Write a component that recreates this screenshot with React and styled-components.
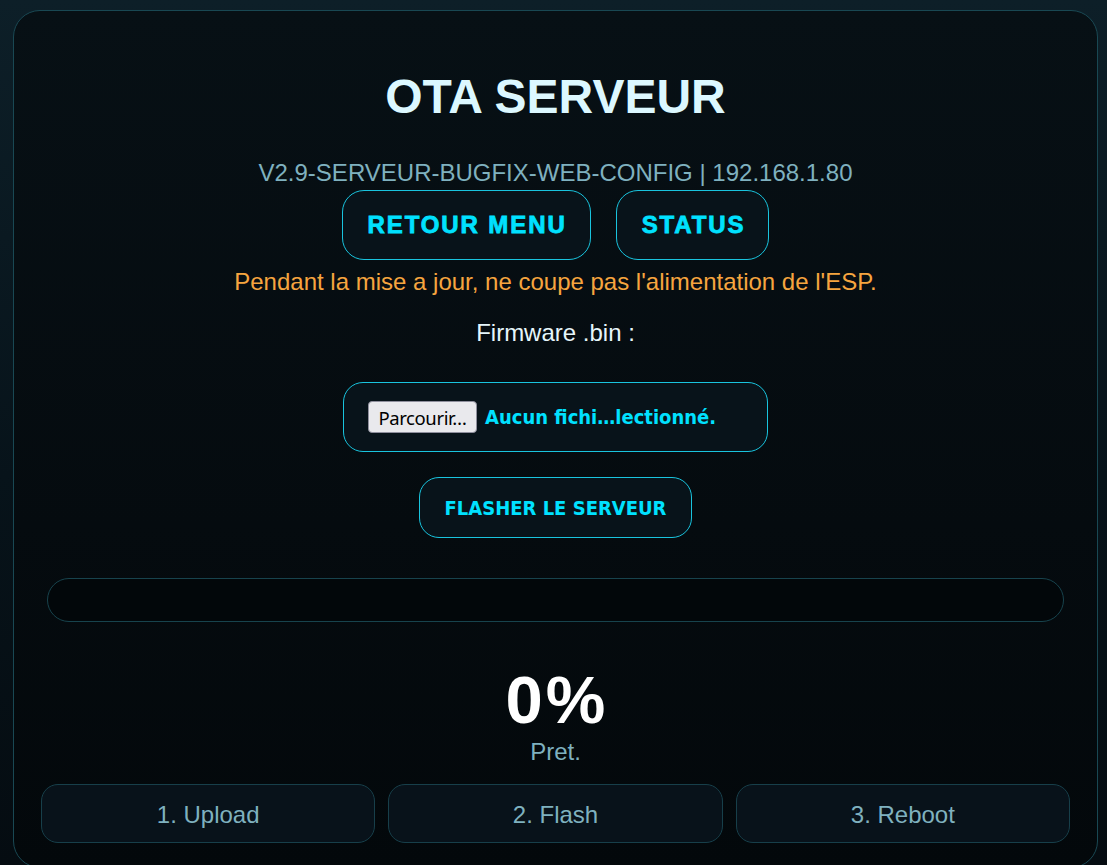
import React from "react";
import styled, { createGlobalStyle } from "styled-components";

const Global = createGlobalStyle`
  html, body {
    margin: 0;
    padding: 0;
    min-height: 100%;
  }
  body {
    background: linear-gradient(180deg, #0d1f28 0%, #07131a 55%, #050c11 100%);
    font-family: "Liberation Sans", Arial, sans-serif;
    overflow: hidden;
  }
`;

const Page = styled.div`
  padding: 10px 9px 0 13px;
  height: 865px;
  box-sizing: border-box;
`;

const Card = styled.main`
  box-sizing: border-box;
  border: 1px solid #194853;
  border-radius: 27px;
  background: linear-gradient(180deg, #071015 0%, #050b0f 60%, #03080b 100%);
  padding: 58px 27px 24px;
  display: flex;
  flex-direction: column;
  align-items: center;
  text-align: center;
`;

const Title = styled.h1`
  margin: 0;
  font-size: 48px;
  font-weight: 700;
  color: #dcf8ff;
  line-height: normal;
`;

const Sub = styled.div`
  margin-top: 35px;
  font-size: 24px;
  color: #7fb1bf;
  line-height: normal;
`;

const NavRow = styled.div`
  margin-top: 3px;
  display: flex;
  gap: 25px;
  justify-content: center;
`;

const NavButton = styled.button`
  box-sizing: border-box;
  height: 70px;
  padding: 0 23px 0 25px;
  border: 1px solid #19c4de;
  border-radius: 22px;
  background: #08131a;
  color: #00e1ff;
  font-family: "Liberation Sans", Arial, sans-serif;
  font-size: 24px;
  font-weight: 700;
  letter-spacing: 1.9px;
  -webkit-text-stroke: 0.8px #00e1ff;
  cursor: pointer;
`;

const Warning = styled.p`
  margin: 8px 0 0;
  font-size: 24px;
  color: #f6a53f;
  line-height: normal;
`;

const Label = styled.label`
  margin-top: 23px;
  font-size: 24px;
  color: #e6f6fb;
  line-height: normal;
`;

const FileBox = styled.div`
  box-sizing: border-box;
  margin-top: 35px;
  width: 425px;
  height: 70px;
  border: 1px solid #19c4de;
  border-radius: 20px;
  background: #08131a;
  display: flex;
  align-items: center;
  padding: 0 24px;
  gap: 8px;
`;

const BrowseButton = styled.span`
  box-sizing: border-box;
  height: 32px;
  width: 109px;
  display: inline-flex;
  align-items: center;
  justify-content: center;
  background: #e9e9ed;
  border: 1px solid #8f8f9d;
  border-radius: 4px;
  color: #000;
  font-family: "Noto Sans", "Open Sans", sans-serif;
  font-size: 18.5px;
  letter-spacing: -0.4px;
`;

const FileName = styled.span`
  color: #00e1ff;
  font-family: "DejaVu Sans Condensed", "DejaVu Sans", sans-serif;
  font-stretch: condensed;
  font-weight: 700;
  font-size: 20px;
  white-space: nowrap;
`;

const FlashButton = styled.button`
  box-sizing: border-box;
  margin-top: 25px;
  height: 61px;
  padding: 0 25px;
  border: 1px solid #19c4de;
  border-radius: 20px;
  background: #08131a;
  color: #00e1ff;
  font-family: "DejaVu Sans Condensed", "DejaVu Sans", sans-serif;
  font-stretch: condensed;
  font-weight: 700;
  font-size: 20px;
  cursor: pointer;
`;

const Progress = styled.div`
  box-sizing: border-box;
  margin-top: 40px;
  align-self: stretch;
  margin-left: 6px;
  margin-right: 6px;
  height: 44px;
  border: 1px solid #17434d;
  border-radius: 22px;
  background: #02070a;
  overflow: hidden;
`;

const Fill = styled.div`
  height: 100%;
  background: linear-gradient(90deg, #00b8d4, #00e1ff);
`;

const Percent = styled.div`
  margin-top: 39px;
  padding-left: 3px;
  font-size: 67px;
  font-weight: 700;
  color: #ffffff;
  letter-spacing: 3px;
  line-height: normal;
`;

const Status = styled.div`
  margin-top: 0px;
  font-size: 24px;
  color: #7fb1bf;
  line-height: normal;
`;

const Steps = styled.div`
  margin-top: 18px;
  align-self: stretch;
  display: grid;
  grid-template-columns: repeat(3, 1fr);
  gap: 13px;
`;

const Step = styled.div`
  box-sizing: border-box;
  height: 59px;
  padding-top: 3px;
  border: 1px solid #173f4a;
  border-radius: 17px;
  background: #08121a;
  color: #7fb1bf;
  font-size: 24px;
  display: flex;
  align-items: center;
  justify-content: center;
`;

export default function App() {
  const progress = 0;
  return (
    <>
      <Global />
      <Page>
        <Card>
          <Title>OTA SERVEUR</Title>
          <Sub>V2.9-SERVEUR-BUGFIX-WEB-CONFIG | 192.168.1.80</Sub>
          <NavRow>
            <NavButton>RETOUR MENU</NavButton>
            <NavButton>STATUS</NavButton>
          </NavRow>
          <Warning>Pendant la mise a jour, ne coupe pas l'alimentation de l'ESP.</Warning>
          <Label>Firmware .bin :</Label>
          <FileBox>
            <BrowseButton>Parcourir…</BrowseButton>
            <FileName>Aucun fichi…lectionné.</FileName>
          </FileBox>
          <FlashButton>FLASHER LE SERVEUR</FlashButton>
          <Progress>
            <Fill style={{ width: `${progress}%` }} />
          </Progress>
          <Percent>{progress}%</Percent>
          <Status>Pret.</Status>
          <Steps>
            <Step>1. Upload</Step>
            <Step>2. Flash</Step>
            <Step>3. Reboot</Step>
          </Steps>
        </Card>
      </Page>
    </>
  );
}
